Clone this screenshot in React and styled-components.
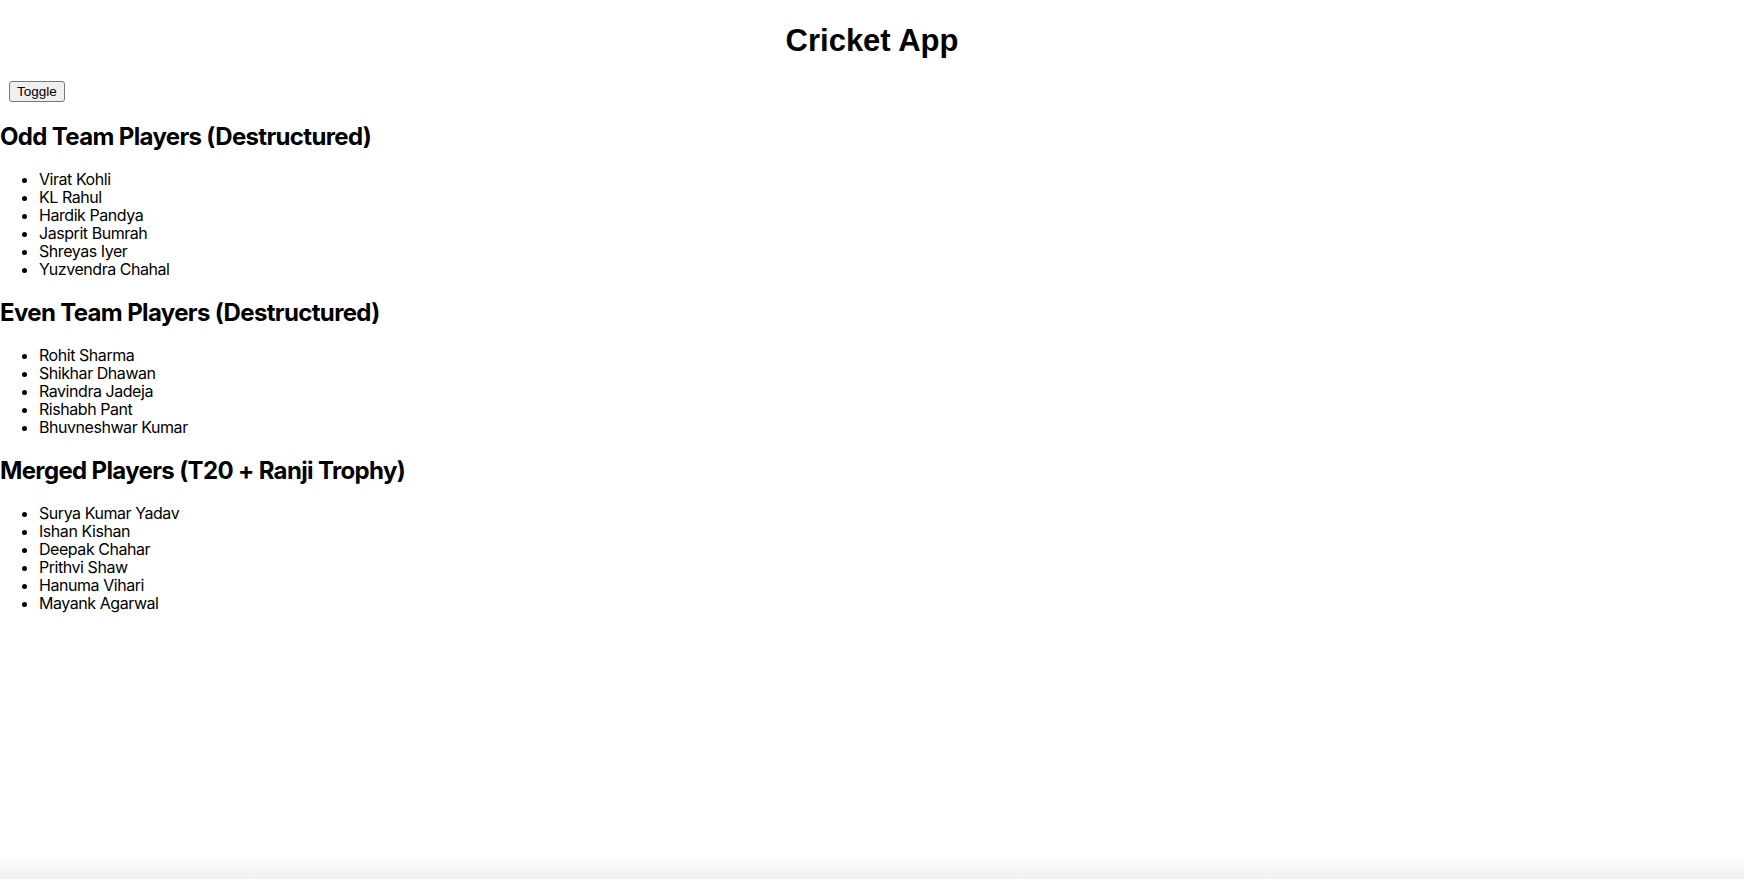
import React from 'react'
import styled, { createGlobalStyle } from 'styled-components'

const GlobalStyle = createGlobalStyle`
  html {
    min-height: 100%;
    background: linear-gradient(to bottom, #ffffff calc(100% - 24px), #f3f3f3 calc(100% - 4px), #eeeeee 100%);
  }
  body {
    margin: 0;
    min-height: 100vh;
    font-family: Inter, "Noto Sans", sans-serif;
    color: #000;
  }
`

const oddTeam = ['Virat Kohli', 'KL Rahul', 'Hardik Pandya', 'Jasprit Bumrah', 'Shreyas Iyer', 'Yuzvendra Chahal']
const evenTeam = ['Rohit Sharma', 'Shikhar Dhawan', 'Ravindra Jadeja', 'Rishabh Pant', 'Bhuvneshwar Kumar']
const merged = ['Surya Kumar Yadav', 'Ishan Kishan', 'Deepak Chahar', 'Prithvi Shaw', 'Hanuma Vihari', 'Mayank Agarwal']

class App extends React.Component {
  state = {
    showTeams: true,
  }
  render() {
    return (
      <Page>
        <GlobalStyle />
        <Title>Cricket App</Title>
        <Toolbar>
          <ToggleButton onClick={() => this.setState({ showTeams: !this.state.showTeams })}>Toggle</ToggleButton>
        </Toolbar>
        {this.state.showTeams && (
          <div>
            <Section title="Odd Team Players (Destructured)" players={oddTeam} />
            <Section title="Even Team Players (Destructured)" players={evenTeam} />
          </div>
        )}
        <Section title="Merged Players (T20 + Ranji Trophy)" players={merged} />
      </Page>
    )
  }
}

const Section = ({ title, players }) => (
  <section>
    <Heading>{title}</Heading>
    <PlayerList>
      {players.map((name, index) => (
        <li key={index}>{name}</li>
      ))}
    </PlayerList>
  </section>
)

const Page = styled.div`
  display: block;
`

const Title = styled.h1`
  margin: 23px 0 22px;
  text-align: center;
  font-family: 'Liberation Sans', Arial, sans-serif;
  font-size: 31px;
  line-height: 36px;
  font-weight: 700;
`

const Toolbar = styled.div`
  display: flex;
  padding: 0 9px;
`

const ToggleButton = styled.button`
  font-family: 'Liberation Sans', Arial, sans-serif;
  font-size: 13.5px;
  line-height: 15px;
  padding: 2px 7px;
  color: #000;
  background: #efefef;
  border: 1px solid #767676;
  border-radius: 3px;
  cursor: pointer;
`

const Heading = styled.h2`
  margin: 20px 0 19px;
  font-size: 24px;
  line-height: 29px;
  font-weight: 700;
  letter-spacing: -0.65px;
`

const PlayerList = styled.ul`
  margin: 16px 0 17px;
  padding-left: 39px;
  font-size: 16px;
  letter-spacing: -0.45px;
  li {
    line-height: 18px;
  }
`

export default App
